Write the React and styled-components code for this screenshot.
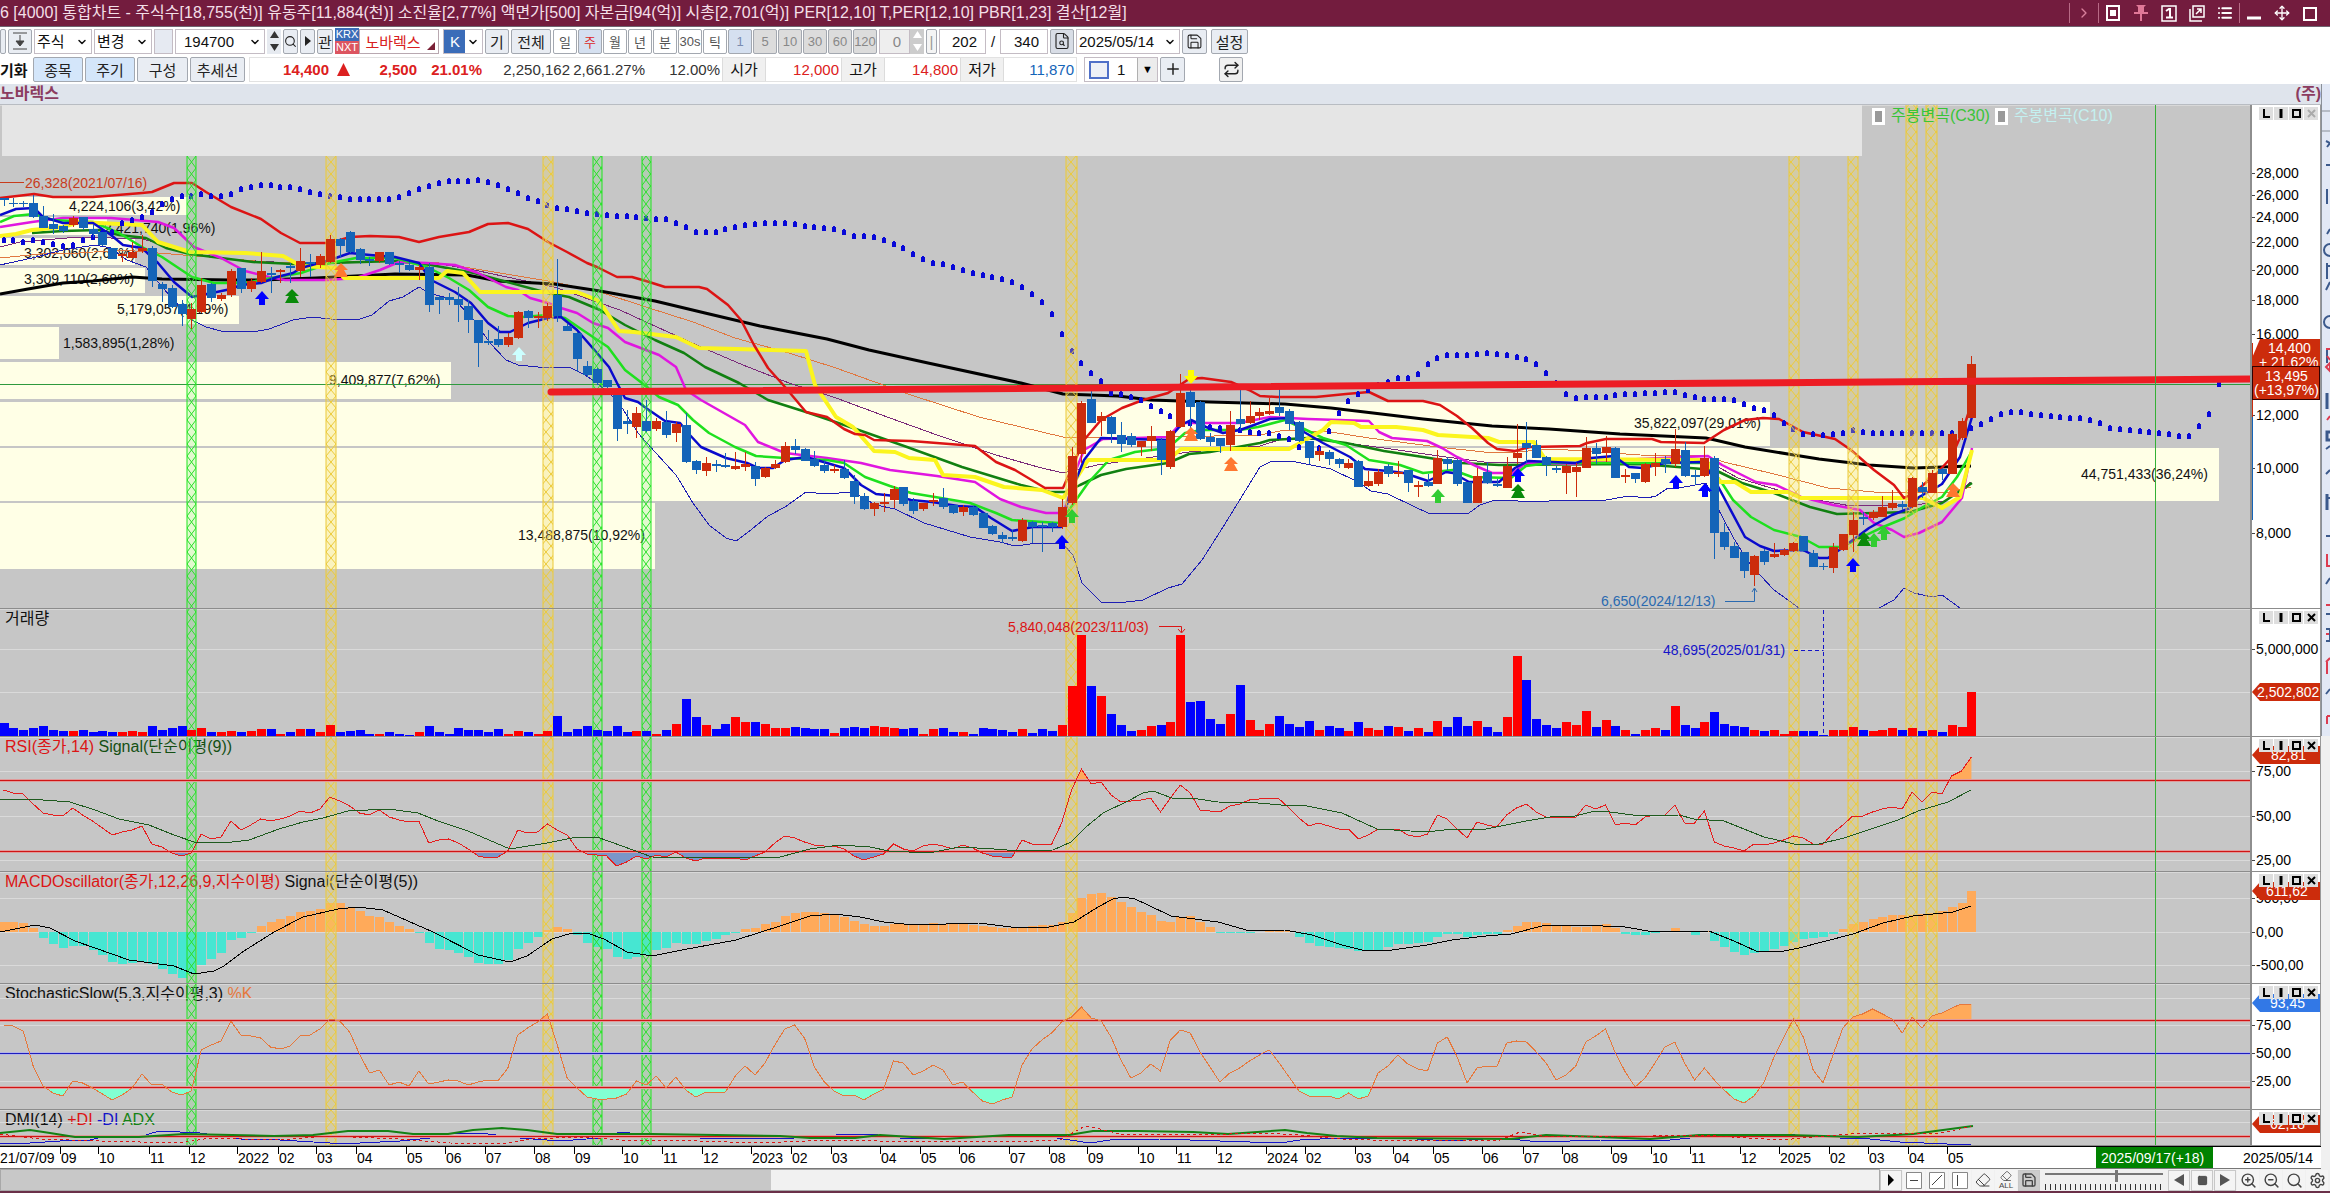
import React from 'react';
import styled, { createGlobalStyle } from 'styled-components';
import { ChevronDown, ChevronRight, Search, ZoomIn, ZoomOut, Settings, Move, Plus, Eraser, Save, Repeat, Square, List, FileSearch } from 'lucide-react';

const font = '"Liberation Sans", "Noto Sans CJK KR", sans-serif';

const GlobalStyle = createGlobalStyle`
  * { box-sizing: border-box; }
  body {
    margin: 0;
    background: #fff;
    overflow: hidden;
    font-family: ${font};
    font-size: 15px;
    color: #111;
  }
  button, input, select {
    font: inherit;
    margin: 0;
    padding: 0;
  }
`;

/* ---------- chart data ---------- */

const STEP = 9.889;
const X0 = 3.5;
const xAt = (i) => X0 + i * STEP;
const nums = (s) => s.trim().split(/\s+/).map(Number);

// high, body top, body bottom, low, up(1) / down(0)
const candles = `
198,198,200,206,0 198,203,204,207,0 201,203,204,207,0 195,203,217,218,0 206,216,228,228,0
214,224,229,234,0 225,226,231,233,0 216,218,225,227,1 217,217,228,230,0 225,229,234,237,0
232,232,245,246,0 248,248,259,259,0 253,254,256,262,1 242,252,258,258,1 235,248,251,253,1
246,248,281,287,0 282,284,289,302,0 285,288,307,308,0 300,304,314,326,0 303,309,319,329,1
278,285,312,313,1 283,284,298,302,0 293,295,299,301,1 269,271,295,297,1 268,268,289,293,0
278,281,289,292,1 252,271,282,283,1 267,273,275,293,0 269,270,272,283,1 263,266,268,283,0
248,261,271,277,1 254,262,264,277,0 254,256,265,268,1 235,239,262,263,1 238,239,246,257,0
231,232,252,253,0 248,249,260,264,0 257,259,261,266,0 252,252,261,263,1 252,252,264,265,0
261,263,265,273,0 262,265,270,271,0 265,267,270,280,1 263,267,305,312,0 295,297,300,314,0
293,297,300,305,0 287,299,305,322,0 300,306,320,333,0 320,320,343,367,0 330,341,343,345,0
326,339,345,347,0 333,337,345,347,1 311,312,338,339,1 310,311,318,328,0 312,316,318,328,1
303,306,318,321,1 259,295,316,322,0 324,326,331,331,0 332,333,359,372,0 361,366,375,377,0
368,369,383,385,0 380,380,387,388,0 395,395,429,441,0 410,421,424,434,0 407,413,427,438,1
400,421,431,432,0 418,421,429,431,1 411,422,435,438,0 422,424,433,442,1 413,425,462,463,0
460,461,470,474,0 457,463,471,476,1 460,464,466,472,0 453,465,467,468,0 452,466,469,470,1
452,464,467,471,1 462,466,479,486,0 467,468,477,478,1 460,464,468,469,1 442,446,462,463,1
439,446,450,454,0 448,449,461,461,0 451,459,466,467,0 460,465,471,473,0 465,469,471,473,1
460,469,478,479,0 475,481,497,504,0 493,496,509,510,0 502,503,509,516,1 493,502,504,512,1
486,489,500,508,1 487,487,504,506,0 498,501,511,514,0 503,503,509,511,1 493,500,502,506,1
488,498,507,509,0 505,505,513,514,0 505,507,512,516,1 506,507,515,516,0 513,513,528,528,0
525,526,534,535,0 532,535,539,543,0 530,537,539,541,0 518,520,541,542,1 521,522,527,543,0
522,525,527,552,0 522,523,527,532,0 499,507,527,529,1 447,456,503,505,1 401,403,454,463,1
390,399,423,423,0 412,416,421,436,1 416,417,434,443,0 422,435,444,452,0 433,436,445,447,0
441,441,447,456,1 426,436,441,451,1 438,440,460,475,0 430,431,467,469,1 374,393,427,428,1
390,392,407,430,0 401,402,439,440,0 433,437,442,446,0 438,438,446,453,0 411,425,445,451,1
388,419,424,430,0 401,416,423,424,1 408,412,416,420,1 398,411,414,415,1 388,407,413,416,0
409,411,424,430,0 421,422,441,442,0 441,441,458,464,0 447,451,455,461,1 450,452,459,465,0
458,459,464,468,0 459,463,468,469,1 460,461,487,487,0 471,481,486,487,1 469,472,484,486,1
464,466,474,477,0 461,472,474,477,1 470,470,483,492,0 481,485,487,497,1 474,482,486,487,0
450,458,484,484,1 457,459,464,470,0 459,460,484,486,0 482,482,503,503,0 468,476,503,503,1
462,472,483,484,0 479,484,486,487,0 457,466,488,488,1 424,453,458,464,1 422,443,448,463,0
440,445,458,458,0 456,457,465,476,0 466,468,470,473,0 464,466,473,494,1 463,467,472,497,1
437,448,468,468,1 443,448,454,464,0 436,447,453,462,1 447,448,478,478,0 469,475,477,483,1
473,473,479,483,0 463,464,482,483,1 453,463,467,476,1 456,459,464,473,0 429,449,464,467,1
442,450,476,477,0 470,475,477,485,0 446,458,476,477,1 456,458,533,559,0 523,532,547,550,0
542,546,558,558,0 552,552,571,578,0 555,556,575,586,1 549,551,562,565,0 543,554,557,558,1
548,550,555,556,1 542,543,551,552,1 536,536,551,552,0 550,553,567,567,0 563,566,567,570,0
543,547,568,573,1 534,534,550,551,1 512,520,535,552,1 512,517,519,525,0 510,512,518,520,1
496,507,517,517,1 490,503,508,510,1 501,504,507,510,0 477,478,507,508,1 482,487,492,498,0
470,473,493,493,1 468,469,474,480,0 433,434,474,474,1 418,421,438,440,1 356,364,418,418,1
`.trim().split(/\s+/).map((c) => c.split(',').map(Number));

const spanDots = nums(`
240 240 242 240 242 244 246 245 240 237 233 232 223 220 217 212 204 199 196 196
194 196 196 194 189 187 185 185 187 187 189 192 194 196 197 199 199 199 199 199
197 193 189 186 183 181 181 181 180 182 185 189 193 198 201 205 208 209 211 213
214 215 216 216 217 218 219 219 223 227 232 232 232 229 227 225 224 223 223 223
224 226 227 228 229 232 236 236 237 240 244 248 254 259 263 264 267 270 273 275
277 279 282 287 294 302 314 334 351 363 373 381 393 394 397 400 406 411 416 420
423 427 427 428 430 430 432 433 433 436 439 447 450 448 431 413 401 394 390 385
382 378 378 374 364 358 355 355 355 354 353 354 355 357 359 364 373 383 394 398
397 397 397 395 394 394 393 393 392 392 395 397 399 399 399 400 404 408 410 415
423 429 434 434 435 434 433 430 432 433 433 433 433 433 433 433 433 433 433 428
424 419 414 412 412 414 415 416 417 418 418 420 423 428 429 430 431 432 433 434
436 436 426 414 384`);

const volumes = nums(`
13 8 6 8 10 6 5 5 6 4 5 4 4 5 4 10 6 8 10 6 8 4 4 5 4 5 7 7 2 4 7 7 4 11 4 5 6 2 2 4
2 1 4 10 4 2 8 6 6 4 7 2 5 4 2 5 20 4 7 10 6 5 10 4 5 5 2 6 12 37 19 11 7 12 19 14 14 12 8 8
9 8 7 7 3 8 9 8 10 9 8 7 8 2 7 8 4 4 2 8 7 6 4 7 3 7 5 11 50 101 50 40 22 11 5 6 10 11 14 101
34 35 17 12 22 51 16 6 12 20 12 9 15 6 10 8 5 14 8 6 10 9 5 8 4 15 9 19 10 15 9 4 19 80 56 17 11 8 14 11
25 9 16 10 6 2 6 8 6 30 11 8 14 24 12 10 9 6 5 6 2 5 5 5 1 6 6 9 6 5 6 8 6 8 5 6 4 11 9 44`);

const rsi = nums(`
790 793 794 804 813 815 816 808 815 821 828 835 832 830 826 844 847 853 856 853 834 839 837 821 830 825 819 821 819 816
811 813 809 797 801 806 813 815 810 817 820 822 821 843 840 839 843 849 856 858 857 851 830 833 832 824 830 835 849 854
855 856 866 862 856 859 855 857 852 858 861 858 858 858 858 860 856 852 843 836 838 842 845 846 846 849 856 860 857 854
844 849 851 846 844 846 849 845 848 853 856 857 857 840 844 844 844 823 790 769 784 782 795 802 801 800 798 812 798 785
793 810 811 812 806 804 800 799 798 799 808 818 826 823 826 829 829 839 835 829 829 829 835 837 834 815 819 829 838 822
825 827 815 808 804 812 817 818 817 817 805 809 805 825 823 825 817 815 815 805 823 823 811 842 846 848 851 844 845 843
840 836 838 844 844 833 825 816 816 812 809 807 809 792 802 792 794 776 771 757`);

const macd = nums(`
10 10 9 4 -6 -12 -16 -14 -14 -18 -23 -30 -32 -31 -30 -32 -37 -42 -46 -42 -33 -27 -21 -8 -6 -1 6 10 13 16
20 21 23 29 29 25 21 16 15 10 6 3 -1 -11 -17 -18 -21 -25 -31 -32 -32 -28 -17 -11 -5 2 5 3 -3 -11
-15 -17 -25 -27 -25 -23 -18 -16 -11 -12 -12 -9 -7 -3 -1 3 4 8 10 16 19 20 20 19 18 15 11 8 6 6
8 8 8 8 9 8 8 8 7 6 5 4 4 5 6 7 7 10 19 34 38 39 35 30 25 20 17 11 10 15
16 10 5 -1 -1 -1 -1 0 2 2 1 -5 -11 -14 -15 -16 -17 -19 -19 -18 -15 -12 -12 -11 -10 -5 -2 -2 -5 -3
-2 -2 2 6 10 10 9 7 6 5 5 7 8 4 -2 -3 -3 -1 1 4 1 -3 1 -9 -15 -20 -23 -21 -20 -17
-14 -10 -7 -6 -5 -2 3 8 10 13 15 17 17 17 18 19 21 25 29 41`);

const stoch = nums(`
1025 1026 1031 1066 1086 1093 1096 1081 1083 1088 1094 1100 1095 1088 1074 1085 1084 1092 1095 1091
1050 1045 1041 1021 1035 1036 1038 1047 1049 1046 1036 1035 1029 1019 1021 1032 1054 1073 1070 1085
1082 1086 1071 1084 1082 1080 1081 1085 1082 1080 1081 1068 1035 1028 1022 1014 1045 1078 1088 1097
1099 1099 1098 1094 1081 1085 1076 1088 1077 1090 1097 1092 1092 1092 1076 1066 1075 1063 1045 1029
1025 1038 1067 1082 1091 1096 1095 1100 1094 1089 1061 1063 1075 1071 1065 1070 1085 1082 1092 1101
1104 1100 1097 1065 1049 1040 1033 1022 1017 1007 1018 1021 1037 1060 1078 1073 1064 1071 1040 1030
1033 1052 1067 1082 1073 1068 1061 1055 1050 1063 1077 1091 1096 1096 1096 1099 1093 1099 1096 1073
1066 1055 1064 1069 1071 1043 1037 1057 1083 1068 1066 1067 1043 1041 1042 1052 1063 1080 1075 1066
1042 1036 1029 1053 1072 1087 1078 1063 1047 1042 1063 1080 1068 1080 1090 1099 1103 1096 1083 1058
1038 1019 1037 1070 1083 1055 1028 1017 1014 1009 1014 1019 1033 1017 1028 1016 1013 1008 1004 1004`);

const priceLines = [
  { color: '#7a2a7a', w: 1, pts: '0,247 20,242 79,237 142,239 174,247 190,253 237,260 293,263 395,261 435,263 474,270 554,287 597,302 620,310 646,322 701,347 743,365 789,383 836,398 890,418 937,435 996,455 1038,467 1063,473 1097,465 1118,462 1189,452 1260,446 1285,438 1323,440 1384,448 1446,457 1492,463 1640,462 1711,463 1738,478 1801,497 1851,506 1914,505 1946,501 1971,482' },
  { color: '#e07840', w: 1, pts: '0,258 51,253 79,253 123,250 158,253 221,258 277,263 340,262 395,261 439,263 494,272 554,282 600,292 646,307 693,322 735,338 789,353 836,368 911,395 979,417 1021,427 1063,437 1168,437 1260,435 1285,430 1331,432 1369,438 1438,447 1484,452 1515,452 1553,449 1640,455 1706,456 1724,462 1774,474 1828,488 1874,492 1951,492 1971,487' },
  { color: '#1e1eb4', w: 1, pts: '0,265 32,258 63,250 95,245 111,248 127,260 146,267 162,287 174,300 192,320 206,327 221,331 253,332 269,329 293,320 312,317 340,320 360,319 372,315 389,301 403,297 419,287 429,293 455,300 474,320 490,343 506,360 518,365 538,367 569,367 585,375 597,383 613,397 619,403 638,433 655,452 676,475 693,503 709,525 726,538 736,541 747,533 768,516 785,507 806,492 825,494 853,492 863,498 876,505 895,509 924,523 970,537 1000,542 1015,546 1038,543 1063,544 1073,555 1082,583 1101,602 1118,603 1143,600 1168,588 1182,584 1202,560 1223,527 1244,493 1260,467 1270,462 1285,461 1296,462 1316,466 1331,469 1358,482 1371,491 1388,494 1415,507 1428,513 1469,513 1480,505 1495,500 1541,502 1557,500 1606,500 1629,496 1647,498 1656,496 1668,488 1679,488 1706,483 1715,503 1733,537 1747,560 1760,575 1774,590 1799,608' },
  { color: '#1e1eb4', w: 1, pts: '1879,608 1894,600 1904,588 1914,593 1932,597 1942,595 1960,608' },
  { color: '#000', w: 3, pts: '0,294 28,289 63,283 93,281 132,277 162,279 231,280 261,280 316,278 395,274 467,275 498,281 554,284 600,291 655,301 705,313 760,326 827,339 869,350 928,363 1021,383 1063,394 1118,396 1151,400 1210,402 1285,404 1331,408 1373,413 1423,419 1492,426 1549,429 1620,434 1706,438 1715,440 1745,447 1794,455 1819,459 1869,465 1914,468 1971,466' },
  { color: '#118011', w: 2.5, pts: '32,233 63,231 99,230 119,235 146,238 166,248 190,254 221,258 253,262 293,264 330,263 395,261 431,265 474,273 548,293 569,297 600,310 625,325 655,340 684,353 705,367 739,383 768,400 806,412 853,428 907,447 962,467 1021,485 1050,492 1067,492 1080,485 1101,475 1126,469 1168,463 1189,454 1210,452 1260,443 1270,440 1308,438 1346,443 1384,451 1423,457 1461,463 1499,465 1640,464 1715,470 1742,483 1774,493 1810,507 1837,514 1874,513 1910,512 1942,503 1972,483' },
  { color: '#e016e0', w: 2.5, pts: '0,227 32,222 63,218 111,218 158,222 174,228 194,247 221,258 245,271 269,277 285,280 328,280 356,278 380,270 399,262 427,263 455,265 478,273 506,287 518,290 530,298 548,303 561,308 577,313 593,323 608,328 625,342 659,355 676,367 686,390 701,400 745,425 758,442 785,453 827,458 861,463 890,470 937,476 975,482 1000,499 1021,507 1046,513 1063,513 1067,503 1076,470 1084,450 1103,439 1168,437 1181,423 1239,423 1270,417 1308,419 1369,421 1379,432 1392,438 1427,441 1442,448 1457,457 1476,466 1492,473 1513,473 1526,463 1576,464 1591,462 1640,459 1708,456 1722,465 1756,482 1776,485 1801,497 1833,505 1860,510 1874,523 1892,530 1904,537 1919,533 1942,522 1962,498 1972,448' },
  { color: '#1ee01e', w: 2.5, pts: '0,222 14,216 34,214 53,220 93,222 119,233 142,247 162,257 192,277 214,283 245,283 277,277 301,273 330,263 356,258 395,258 427,267 449,278 469,290 488,307 508,316 522,317 548,315 565,318 587,333 608,347 625,370 642,383 659,397 678,405 693,420 709,433 735,447 756,456 785,458 827,460 844,463 865,477 890,486 911,493 941,498 970,503 996,513 1012,520 1059,523 1069,510 1088,483 1109,460 1135,452 1168,448 1185,433 1202,430 1240,430 1258,427 1285,420 1300,427 1323,438 1346,445 1369,460 1400,465 1423,473 1453,470 1472,477 1511,478 1526,466 1549,463 1706,463 1720,480 1733,500 1751,517 1774,530 1801,537 1819,547 1842,547 1860,538 1883,527 1905,518 1923,507 1942,497 1957,477 1971,453' },
  { color: '#fbf51e', w: 4, pts: '0,236 16,234 32,230 63,227 79,222 119,224 142,225 158,242 190,252 245,253 283,256 301,266 336,268 344,278 439,278 447,271 463,273 480,292 577,292 597,300 604,308 619,331 634,332 676,337 699,348 806,351 815,385 836,417 853,427 874,451 895,452 909,458 935,460 943,475 975,477 1004,487 1042,490 1063,498 1069,490 1088,460 1168,460 1181,449 1289,449 1300,443 1323,430 1331,422 1354,423 1361,427 1396,427 1423,430 1438,435 1472,437 1488,438 1499,442 1534,442 1545,459 1706,460 1720,482 1735,482 1751,492 1788,492 1801,498 1923,498 1942,508 1960,497 1972,450' },
  { color: '#0a0acc', w: 2.5, pts: '0,215 16,209 34,208 43,217 63,223 93,223 111,235 123,245 142,248 158,263 174,282 192,297 212,293 231,289 241,285 261,283 277,277 293,273 301,268 330,260 350,253 370,255 395,257 419,263 431,280 455,292 471,303 488,323 500,332 510,332 528,323 548,318 561,317 577,330 597,353 609,367 617,383 625,398 638,402 646,408 665,421 680,423 688,433 701,447 726,458 747,463 758,468 773,468 785,460 806,457 827,463 844,468 861,485 876,494 895,496 911,500 932,502 958,506 975,507 991,518 1012,531 1033,527 1061,527 1069,497 1084,460 1101,438 1130,439 1168,440 1181,425 1191,420 1206,427 1223,433 1240,430 1254,425 1270,419 1289,418 1304,432 1323,443 1350,457 1365,469 1388,471 1404,473 1428,481 1446,472 1453,473 1469,482 1499,482 1515,468 1528,461 1576,463 1591,458 1614,456 1629,467 1643,468 1665,463 1702,462 1713,477 1729,507 1745,537 1760,546 1774,551 1803,550 1819,558 1828,558 1842,548 1869,528 1892,515 1910,508 1919,497 1932,490 1942,484 1960,457 1972,417' },
  { color: '#dc1414', w: 2.5, pts: '0,198 34,194 53,197 93,197 142,193 152,192 174,183 192,183 206,192 231,207 261,219 281,233 300,243 330,243 350,237 370,236 399,237 419,242 439,237 469,232 488,224 508,223 528,229 548,242 567,252 587,263 597,267 617,277 632,277 646,281 665,287 699,287 707,289 728,305 741,320 754,345 768,368 785,387 806,412 827,417 844,429 855,434 865,435 874,440 911,441 975,446 996,462 1015,470 1045,488 1063,488 1071,470 1084,440 1101,420 1122,408 1143,400 1168,393 1189,379 1202,378 1231,382 1249,390 1260,396 1277,397 1316,397 1346,394 1369,392 1388,401 1423,401 1440,405 1457,416 1472,428 1488,443 1497,449 1515,451 1530,447 1580,446 1587,443 1606,439 1652,439 1661,442 1704,443 1724,430 1745,420 1763,418 1779,419 1803,432 1835,439 1851,450 1874,470 1894,485 1904,498 1914,493 1937,473 1951,458 1962,433 1971,405' },
];

const rsiSignal = '0,800 30,799 70,802 95,810 119,819 149,825 174,835 194,842 224,843 249,840 279,829 303,822 323,818 348,811 388,809 418,813 438,821 468,831 510,849 547,843 572,838 597,837 622,846 652,857 687,858 780,857 810,849 840,845 870,847 889,851 929,853 959,847 994,849 1019,851 1053,850 1071,842 1086,827 1103,813 1128,801 1143,793 1153,791 1172,798 1198,799 1218,802 1258,803 1281,805 1307,806 1342,813 1377,829 1427,832 1452,829 1486,829 1526,821 1550,817 1575,816 1595,811 1610,812 1640,816 1679,815 1694,819 1724,821 1744,829 1764,837 1794,844 1819,844 1844,838 1868,830 1898,820 1918,811 1948,802 1971,790';
const macdSignal = '0,932 35,925 50,928 75,941 95,948 129,960 174,966 194,974 214,971 224,966 244,951 274,932 303,917 338,909 358,907 383,910 433,932 478,955 510,962 527,956 552,939 572,933 587,933 604,939 627,952 652,956 682,950 736,940 780,926 810,916 835,914 860,917 884,922 914,925 979,923 1019,928 1049,927 1074,922 1098,907 1113,899 1123,897 1135,899 1148,905 1171,916 1218,922 1250,931 1285,930 1312,935 1342,945 1362,950 1392,950 1427,945 1452,940 1486,936 1511,934 1546,925 1580,925 1625,927 1654,932 1709,931 1734,941 1756,951 1779,952 1799,948 1853,934 1883,923 1913,916 1953,912 1971,906';
const adx = '0,1133 30,1130 50,1133 75,1137 139,1137 184,1134 274,1136 313,1135 348,1131 388,1131 413,1134 448,1134 473,1130 502,1128 527,1130 557,1134 652,1134 780,1136 810,1138 855,1138 880,1135 944,1139 1009,1135 1069,1135 1093,1131 1138,1131 1193,1132 1228,1134 1285,1130 1307,1133 1337,1136 1377,1138 1511,1139 1546,1135 1600,1137 1650,1139 1699,1135 1789,1135 1858,1137 1913,1134 1943,1130 1973,1126';
const minusDi = '0,1143 30,1143 60,1141 90,1140 110,1135 139,1137 159,1131 200,1133 240,1139 280,1140 330,1143 360,1143 400,1141 430,1138 450,1133 480,1133 520,1138 560,1141 600,1138 620,1132 650,1135 700,1138 780,1139 850,1134 870,1134 900,1138 960,1138 990,1136 1050,1137 1070,1140 1090,1143 1110,1140 1160,1139 1220,1141 1280,1143 1300,1140 1340,1138 1400,1138 1450,1141 1500,1138 1540,1142 1600,1140 1660,1141 1710,1136 1780,1134 1840,1138 1870,1139 1900,1142 1971,1145';
const plusDi = '0,1134 40,1139 100,1141 180,1143 210,1138 280,1140 330,1136 400,1139 450,1143 500,1144 530,1139 580,1137 620,1140 700,1141 760,1143 830,1140 880,1141 960,1141 1010,1142 1060,1140 1085,1126 1100,1129 1120,1134 1200,1135 1260,1133 1300,1135 1340,1139 1400,1141 1500,1140 1520,1132 1545,1136 1600,1137 1700,1135 1780,1140 1850,1134 1940,1133 1960,1129 1971,1126';

// y, height, width
const profile = [
  [197, 18, 188], [217, 18, 107], [238, 27, 135], [268, 25, 145], [296, 28, 239],
  [327, 32, 59], [362, 37, 451], [402, 44, 1770], [448, 53, 2219], [503, 66, 655],
];

// x, baseline, text
const profileLabels = [
  [69, 211, '4,224,106(3,42%)'], [104, 233, '2,421,740(1,96%)'], [24, 258, '3,302,060(2,67%)'],
  [24, 284, '3,309,110(2,68%)'], [117, 314, '5,179,057(4,19%)'], [63, 348, '1,583,895(1,28%)'],
  [329, 385, '9,409,877(7,62%)'], [518, 540, '13,488,875(10,92%)'],
  [1634, 428, '35,822,097(29,01%)'], [2081, 479, '44,751,433(36,24%)'],
];

const bands = [
  [187, 9, 'g'], [326, 10, 'y'], [543, 10, 'y'], [593, 9, 'g'], [642, 9, 'g'],
  [1066, 11, 'y'], [1789, 10, 'y'], [1848, 10, 'y'], [1906, 11, 'y'], [1926, 11, 'y'],
];

const single = 'M0 -7L7 1H3V7H-3V1H-7Z';
const twin = 'M0 -7L7 0H3L7 7H-7L-3 0H-7Z';
const marks = [
  [262, 298, single, '#00f'], [1062, 542, single, '#00f'], [1518, 475, single, '#00f'],
  [1676, 482, single, '#00f'], [1705, 490, single, '#00f'], [1853, 565, single, '#00f'],
  [292, 296, twin, '#0a8a0a'], [1518, 491, twin, '#0a8a0a'], [1864, 539, twin, '#0a8a0a'],
  [341, 270, twin, '#ff7830'], [1191, 434, twin, '#ff7830'], [1231, 464, twin, '#ff7830'], [1953, 490, twin, '#ff7830'],
  [1072, 516, single, '#32cc32'], [1438, 496, single, '#32cc32'], [1874, 540, single, '#32cc32'], [1884, 533, single, '#32cc32'],
  [519, 354, single, '#ccffff'], [1191, 377, 'M0 7L7 -1H3V-7H-3V-1H-7Z', '#ff0'],
];

const months = [
  [60, '09'], [98, '10'], [149, '11'], [189, '12'], [237, '2022'], [278, '02'], [316, '03'], [356, '04'],
  [406, '05'], [445, '06'], [485, '07'], [534, '08'], [574, '09'], [622, '10'], [662, '11'], [702, '12'],
  [751, '2023'], [791, '02'], [831, '03'], [880, '04'], [920, '05'], [959, '06'], [1009, '07'], [1049, '08'],
  [1087, '09'], [1138, '10'], [1176, '11'], [1216, '12'], [1266, '2024'], [1305, '02'], [1355, '03'],
  [1393, '04'], [1433, '05'], [1482, '06'], [1523, '07'], [1562, '08'], [1611, '09'], [1651, '10'],
  [1690, '11'], [1740, '12'], [1779, '2025'], [1829, '02'], [1868, '03'], [1908, '04'], [1947, '05'],
];

const toPoints = (ys) => ys.map((y, i) => `${xAt(i)},${y}`).join(' ');
const toArea = (ys, base) => `${X0},${base} ${toPoints(ys)} ${xAt(ys.length - 1)},${base}`;

/* ---------- title bar ---------- */

const Page = styled.div`
  display: flex;
  flex-direction: column;
  min-height: 100vh;
  background: #fff;
`;

const TitleBar = styled.header`
  display: flex;
  align-items: center;
  justify-content: space-between;
  height: 27px;
  background: #731c3e;
  border-bottom: 1px solid #6e6470;
  color: #f6e6ec;
  white-space: pre;
`;

const Title = styled.h1`
  margin: 0;
  font-size: 16px;
  font-weight: 400;
  line-height: 24px;
  color: #f3dfe7;
`;

const TitleTools = styled.div`
  display: flex;
  align-items: center;
  gap: 12px;
`;

const TitleButton = styled.button`
  display: flex;
  align-items: center;
  justify-content: center;
  width: 16px;
  height: 20px;
  border: 0;
  background: none;
  color: ${(p) => (p.$dim ? '#d8809c' : '#fff')};
`;

const Divider = styled.span`
  width: 1px;
  height: 20px;
  margin: 0 -6px;
  background: #b86a86;
`;

/* ---------- toolbars ---------- */

const Toolbar = styled.div`
  display: flex;
  align-items: center;
  gap: 2px;
  height: 28px;
  white-space: nowrap;
`;

const Group = styled.div`
  display: flex;
  flex: none;
  gap: ${(p) => p.$gap || 0}px;
  font-size: ${(p) => p.$size || 15}px;
`;

const ToolButton = styled.button`
  display: flex;
  flex: none;
  align-items: center;
  justify-content: center;
  width: ${(p) => p.$w}px;
  height: 25px;
  border: 1px solid #a3a8b0;
  border-radius: 2px;
  background: ${(p) => p.$bg || '#e9edf3'};
  color: ${(p) => p.$color || '#222'};
`;

const Field = styled.div`
  position: relative;
  display: flex;
  flex: none;
  width: ${(p) => p.$w}px;
  height: 25px;
  border: 1px solid #c4bcc4;
  background: ${(p) => p.$bg || '#fff'};
  > svg {
    position: absolute;
    right: 3px;
    top: 6px;
    pointer-events: none;
  }
`;

const Select = styled.select`
  appearance: none;
  width: 100%;
  border: 0;
  padding: 0 2px;
  background: transparent;
  color: ${(p) => p.$color || '#111'};
`;

const KSelect = styled(Field)`
  background: linear-gradient(to right, #3a6cb8 21px, #fff 21px);
  > select { padding-left: 6px; }
`;

const TextBox = styled.input`
  width: 100%;
  min-width: 0;
  border: 0;
  padding: 0 8px;
  background: transparent;
  color: ${(p) => p.$color || '#111'};
  text-align: ${(p) => p.$align || 'right'};
`;

const Spinner = styled.div`
  display: flex;
  flex: none;
  flex-direction: column;
  width: 14px;
  height: 25px;
`;

const SpinButton = styled.button`
  display: flex;
  flex: 1;
  align-items: center;
  justify-content: center;
  border: 0;
  background: ${(p) => (p.$off ? '#ccc' : '#e6eaf0')};
  color: ${(p) => (p.$off ? '#fff' : '#333')};
`;

const Market = styled.div`
  display: flex;
  flex: none;
  flex-direction: column;
  width: 24px;
  color: #fff;
  font-size: 11px;
  line-height: 13px;
  text-align: center;
  > span:first-child { background: #3a6cb8; }
  > span:last-child { background: #dc5560; }
`;

const StockName = styled.button`
  position: relative;
  flex: none;
  width: 80px;
  height: 25px;
  margin: 0 2px 0 -2px;
  border: 1px solid #b8a8b0;
  padding-right: 12px;
  background: #fff;
  color: #d82020;
  &::after {
    content: '';
    position: absolute;
    right: 3px;
    bottom: 3px;
    border-left: 8px solid transparent;
    border-bottom: 8px solid #7a2036;
  }
`;

const Slash = styled.span`
  width: 10px;
  text-align: center;
`;

const Strong = styled.strong`
  flex: none;
  width: 31px;
`;

const Quote = styled.div`
  display: flex;
  flex: none;
  align-items: center;
  height: 25px;
  margin: 0 5px 0 2px;
  border: 1px solid #e2e2e2;
`;

const Value = styled.span`
  width: ${(p) => p.$w}px;
  padding-right: 2px;
  text-align: right;
  color: ${(p) => p.$color || '#333'};
  font-weight: ${(p) => (p.$bold ? 700 : 400)};
`;

const Rise = styled.span`
  width: 21px;
  padding-left: 6px;
  line-height: 0;
`;

const QuoteLabel = styled.span`
  width: 44px;
  line-height: 23px;
  text-align: center;
  background: #f0f0f0;
  border: solid #dcdcdc;
  border-width: 0 1px;
`;

const Swatch = styled.span`
  flex: none;
  width: 20px;
  height: 18px;
  margin: 3px 0 0 4px;
  border: 2px solid #5070c8;
  background: #eef0f6;
`;

const DropArrow = styled.button`
  flex: none;
  width: 20px;
  border: 0;
  border-left: 1px solid #b0b0b0;
  background: #ececec;
  font-size: 11px;
`;

const Spacer = styled.span`
  flex: none;
  width: ${(p) => p.$w}px;
`;

/* ---------- chart ---------- */

const Body = styled.main`
  display: flex;
  margin-top: 1px;
`;

const ChartColumn = styled.div`
  flex: 1;
  min-width: 0;
`;

const ChartHeader = styled.div`
  display: flex;
  justify-content: space-between;
  height: 21px;
  overflow: hidden;
  background: #dfe4ec;
  border-bottom: 1px solid #b8bcc2;
  color: #8c3c60;
  font-size: 16px;
  font-weight: 700;
  line-height: 20px;
`;

const PanelRow = styled.section`
  display: flex;
  height: ${(p) => p.$h}px;
  border-bottom: 1px solid #8c8c8c;
`;

const Plot = styled.div`
  position: relative;
  flex: 1;
  min-width: 0;
  background: #c6c6c6;
  box-shadow: inset 0 1px #d8d8d8;
  overflow: hidden;
`;

const Drawing = styled.svg`
  position: relative;
  display: block;
  width: 100%;
  height: 100%;
  font-size: 14px;
`;

const Caption = styled.h2`
  position: absolute;
  left: 5px;
  top: 0;
  margin: 0;
  font-size: 16px;
  font-weight: 400;
  line-height: 20px;
`;

const Tint = styled.span`
  color: ${(p) => p.$color};
`;

const AxisBox = styled.div`
  position: relative;
  flex: none;
  width: 71px;
  background: #fff;
  border-left: 2px solid #8e8e8e;
  border-right: 1px solid #999;
`;

const PanelButtons = styled.div`
  position: absolute;
  right: 2px;
  top: 2px;
  display: flex;
  gap: 1px;
`;

const PanelButton = styled.button`
  display: flex;
  align-items: center;
  justify-content: center;
  width: 14px;
  height: 13px;
  border: 0;
  background: #dedede;
  color: ${(p) => (p.$off ? '#aaa' : '#000')};
`;

const Legend = styled.div`
  position: absolute;
  left: 1872px;
  top: 2px;
  display: flex;
  gap: 5px;
  font-size: 16px;
  line-height: 18px;
`;

const LegendItem = styled.label`
  display: flex;
  align-items: center;
  gap: 6px;
  color: ${(p) => p.$color};
`;

const LegendCheck = styled.input`
  appearance: none;
  width: 13px;
  height: 17px;
  border: 3px solid #fff;
  background: #999;
`;

const TimeAxis = styled.div`
  height: 24px;
  background: #fff;
  border-top: 1px solid #000;
  border-bottom: 2px solid #777;
`;

const Bottom = styled.footer`
  display: flex;
  align-items: center;
  height: 24px;
  margin-top: -1px;
  background: #f0f0f0;
  border-bottom: 2px solid #6a3048;
`;

const ScrollTrack = styled.div`
  flex: 1;
  height: 22px;
  border: 1px solid #a8a8a8;
  background: #f1f1f1;
`;

const ScrollThumb = styled.div`
  width: 41%;
  height: 100%;
  background: #c8c8c8;
`;

const BottomTools = styled.div`
  display: flex;
  flex: none;
  align-items: center;
  width: 450px;
  gap: 1px;
`;

const IconButton = styled.button`
  display: flex;
  flex: none;
  align-items: center;
  justify-content: center;
  width: 22px;
  height: 21px;
  border: ${(p) => (p.$plain ? '0' : '1px solid #c8c8c8')};
  background: ${(p) => p.$bg || '#f4f4f4'};
  color: #444;
`;

const EraseAll = styled(IconButton)`
  flex-direction: column;
  font-size: 8px;
  line-height: 8px;
`;

const SliderBox = styled.div`
  display: flex;
  flex-direction: column;
  gap: 2px;
  width: 118px;
  margin: 0 4px;
  &::after {
    content: '';
    height: 6px;
    background: repeating-linear-gradient(to right, #333 0 1px, transparent 1px 5px);
  }
`;

const Slider = styled.input`
  appearance: none;
  width: 100%;
  height: 12px;
  background: linear-gradient(#777, #777) 0 3px / 100% 2px no-repeat;
  &::-webkit-slider-thumb {
    appearance: none;
    width: 3px;
    height: 12px;
    background: #777;
  }
`;

const SideStrip = styled.aside`
  flex: none;
  width: 9px;
  background: linear-gradient(#e2e8f5 652px, #f0f0f0 652px);
`;

function Line({ pts, color, w = 1, dash }) {
  return (
    <polyline
      points={pts}
      fill="none"
      stroke={color}
      strokeWidth={w}
      strokeDasharray={dash}
      strokeLinejoin="round"
      shapeRendering={w === 1 ? 'crispEdges' : 'auto'}
    />
  );
}

function Rule({ y, color = '#dadada', w = 1 }) {
  return <line x1="0" x2="100%" y1={y} y2={y} stroke={color} strokeWidth={w} shapeRendering="crispEdges" />;
}

function Level({ y, color, halo }) {
  return (
    <>
      <Rule y={y} color={halo} w={3} />
      <Rule y={y} color={color} />
    </>
  );
}

function Bands({ top, height }) {
  return bands.map(([x, w, kind]) => (
    <rect key={x} x={x} y={top} width={w} height={height} fill={`url(#hatch-${kind})`} stroke={kind === 'g' ? '#1ee61e' : '#ecca38'} />
  ));
}

function Hatches() {
  return (
    <defs>
      <pattern id="hatch-g" width="9" height="12" patternUnits="userSpaceOnUse" x="187">
        <rect width="9" height="12" fill="#6ee66e" opacity="0.2" />
        <path d="M0 0L9 12M9 0L0 12" stroke="#28e028" fill="none" />
      </pattern>
      <pattern id="hatch-y" width="10" height="12" patternUnits="userSpaceOnUse" x="326">
        <rect width="10" height="12" fill="#f0d860" opacity="0.3" />
        <path d="M0 0L10 12M10 0L0 12" stroke="#ecca38" fill="none" />
      </pattern>
    </defs>
  );
}

function Axis({ top, ticks = [], tag, children, lastOff }) {
  return (
    <AxisBox>
      <Drawing>
        <g transform={`translate(0 ${-top})`}>
          {ticks.map(([y, label]) => (
            <g key={label}>
              <path d={`M0 ${y + 0.5}h3`} stroke="#444" />
              <text x="4" y={y + 5}>{label}</text>
            </g>
          ))}
          {tag && (
            <g fill={tag.color}>
              <path d={`M0 ${tag.y}L8 ${tag.y - 9}H70V${tag.y + 9}H8Z`} />
              <text x={tag.x} y={tag.y + 5} fill="#fff">{tag.text}</text>
            </g>
          )}
          {children}
        </g>
      </Drawing>
      <PanelButtons>
        <PanelButton aria-label="L"><svg width="8" height="9"><path d="M2 0V8H8" stroke="#000" strokeWidth="2" fill="none" /></svg></PanelButton>
        <PanelButton aria-label="I"><svg width="8" height="9"><path d="M4 0V9" stroke="#000" strokeWidth="3" /></svg></PanelButton>
        <PanelButton aria-label="최대화"><svg width="9" height="9"><path d="M1 1H8V8H1Z" stroke="#000" strokeWidth="2" fill="none" /></svg></PanelButton>
        <PanelButton aria-label="닫기" $off={lastOff}><svg width="9" height="9"><path d="M1 1L8 8M8 1L1 8" stroke="currentColor" strokeWidth="2" /></svg></PanelButton>
      </PanelButtons>
    </AxisBox>
  );
}

function Panel({ top, height, caption, axis, overlay, children }) {
  return (
    <PanelRow $h={height}>
      <Plot>
        {caption && <Caption>{caption}</Caption>}
        <Drawing>
          <g transform={`translate(0 ${-top})`}>
            {children}
            <line x1="2155.5" x2="2155.5" y1={top} y2={top + height} stroke="#35b035" />
          </g>
        </Drawing>
        {overlay}
      </Plot>
      {axis}
    </PanelRow>
  );
}

function PricePanel() {
  const axis = (
    <Axis
      top={105}
      lastOff
      ticks={[[173, '28,000'], [195, '26,000'], [217, '24,000'], [242, '22,000'], [270, '20,000'], [300, '18,000'], [334, '16,000'], [415, '12,000'], [468, '10,000'], [533, '8,000']]}
    >
      <rect x="-2" y="343" width="3" height="74" fill="#cc2c0c" />
      <rect x="-2" y="417" width="3" height="103" fill="#1464b8" />
      <path d="M8 339H70V366H0V358Z" fill="#cc2c0c" />
      <text x="16" y="353" fill="#fff">14,400</text>
      <text x="7" y="367" fill="#fff">+ 21,62%</text>
      <rect x="0.500" y="366.500" width="67" height="33" fill="#cc2c0c" stroke="#300" />
      <text x="13" y="381" fill="#fff">13,495</text>
      <text x="2" y="395" fill="#fff">(+13,97%)</text>
    </Axis>
  );
  const overlay = (
    <Legend>
      <LegendItem $color="#38c438"><LegendCheck type="checkbox" />주봉변곡(C30)</LegendItem>
      <LegendItem $color="#c4f0f0"><LegendCheck type="checkbox" />주봉변곡(C10)</LegendItem>
    </Legend>
  );
  return (
    <Panel top={105} height={504} axis={axis} overlay={overlay}>
      <Hatches />
      {profile.map(([y, h, w]) => <rect key={y} x="0" y={y} width={w} height={h} fill="#ffffe6" />)}
      {profileLabels.map(([x, y, t]) => <text key={t} x={x} y={y} fill="#111">{t}</text>)}
      <path d="M0 182.500H24" stroke="#c83c1c" />
      <text x="25" y="188" fill="#c83c1c">26,328(2021/07/16)</text>
      <Rule y={384} color="#2e9a3e" />
      {priceLines.map((l, i) => <Line key={i} {...l} />)}
      {spanDots.map((y, i) => (
        <path key={i} d={`M${Math.round(xAt(i)) - 2} ${y - 2}h1v-1h2v1h1v5h-4z`} fill="#0808d8" />
      ))}
      <Bands top={100} height={512} />
      <g shapeRendering="crispEdges">
        {candles.map(([hi, a, b, lo, up], i) => {
          const x = Math.round(xAt(i));
          return (
            <g key={i} fill={up ? '#cc2c0c' : '#1464b8'}>
              <rect x={x} y={hi} width="1" height={lo - hi} />
              <rect x={x - 4} y={a} width="9" height={Math.max(b - a, 1)} />
            </g>
          );
        })}
      </g>
      {marks.map(([x, y, d, c]) => <path key={`${x}-${y}`} d={d} fill={c} transform={`translate(${x} ${y})`} />)}
      <path d="M551 392L2262 379" stroke="#ed1c24" strokeWidth="7" strokeLinecap="round" />
      <text x="1601" y="606" fill="#2a6ab0">6,650(2024/12/13)</text>
      <path d="M1725 601.500H1754.500V589M1752 592L1754.500 588L1757 592" stroke="#2a6ab0" fill="none" />
      <rect x="2" y="105" width="1860" height="51" fill="#e5e5e5" />
    </Panel>
  );
}

function VolumePanel() {
  const axis = <Axis top={609} ticks={[[649, '5,000,000']]} tag={{ y: 692, x: 5, text: '2,502,802', color: '#cc2c0c' }} />;
  return (
    <Panel top={609} height={128} caption="거래량" axis={axis}>
      <Rule y={649} />
      <Rule y={692} />
      <Bands top={600} height={140} />
      <text x="1008" y="632" fill="#dc1414">5,840,048(2023/11/03)</text>
      <path d="M1159 626.500H1181.500V632M1178 629L1181.500 633L1185 629" stroke="#dc1414" fill="none" />
      <text x="1663" y="655" fill="#1414c8">48,695(2025/01/31)</text>
      <path d="M1794 650.500H1823.500M1823.500 610V736" stroke="#1414c8" strokeDasharray="4 3" fill="none" />
      <g shapeRendering="crispEdges">
        {volumes.map((v, i) => (
          <rect key={i} x={Math.round(xAt(i)) - 4} y={736 - v} width="9" height={v} fill={candles[i][4] ? '#f00' : '#00f'} />
        ))}
      </g>
    </Panel>
  );
}

function RsiPanel() {
  const axis = <Axis top={737} ticks={[[771, '75,00'], [816, '50,00'], [860, '25,00']]} tag={{ y: 755, x: 19, text: '82,81', color: '#cc2c0c' }} />;
  const caption = <><Tint $color="#dc1414">RSI(종가,14)</Tint> <Tint $color="#145014">Signal(단순이평(9))</Tint></>;
  return (
    <Panel top={737} height={135} caption={caption} axis={axis}>
      <clipPath id="rsi-hot"><rect x="0" y="737" width="2300" height="43" /></clipPath>
      <clipPath id="rsi-cold"><rect x="0" y="851" width="2300" height="30" /></clipPath>
      {[771, 816, 860].map((y) => <Rule key={y} y={y} />)}
      <Bands top={730} height={150} />
      <polygon points={toArea(rsi, 780)} fill="#ffaa5a" clipPath="url(#rsi-hot)" />
      <polygon points={toArea(rsi, 851)} fill="#7a96c8" clipPath="url(#rsi-cold)" />
      <Level y={780} color="#d01414" halo="#e09a9a" />
      <Level y={851} color="#d01414" halo="#e09a9a" />
      <Line pts={toPoints(rsi)} color="#e61e1e" />
      <Line pts={rsiSignal} color="#1e5a1e" />
    </Panel>
  );
}

function MacdPanel() {
  const axis = <Axis top={872} ticks={[[898, '500,00'], [932, '0,00'], [965, '-500,00']]} tag={{ y: 891, x: 14, text: '611,62', color: '#cc2c0c' }} />;
  const caption = <><Tint $color="#dc1414">MACDOscillator(종가,12,26,9,지수이평)</Tint> Signal(단순이평(5))</>;
  return (
    <Panel top={872} height={112} caption={caption} axis={axis}>
      {[898, 932, 965].map((y) => <Rule key={y} y={y} />)}
      <g shapeRendering="crispEdges">
        {macd.map((v, i) => (
          <rect key={i} x={Math.round(xAt(i)) - 4} y={v > 0 ? 932 - v : 932} width="9" height={Math.abs(v)} fill={v > 0 ? '#ffaa5a' : '#46e6d2'} />
        ))}
      </g>
      <Bands top={860} height={130} />
      <Line pts={macdSignal} color="#000" />
    </Panel>
  );
}

function StochPanel() {
  const axis = <Axis top={984} ticks={[[1025, '75,00'], [1053, '50,00'], [1081, '25,00']]} tag={{ y: 1003, x: 18, text: '93,45', color: '#3278e6' }} />;
  const caption = <>StochasticSlow(5,3,지수이평,3) <Tint $color="#e6783c">%K</Tint></>;
  return (
    <Panel top={984} height={126} caption={caption} axis={axis}>
      <clipPath id="st-hot"><rect x="0" y="984" width="2300" height="36" /></clipPath>
      <clipPath id="st-cold"><rect x="0" y="1088" width="2300" height="22" /></clipPath>
      {[998, 1025, 1081].map((y) => <Rule key={y} y={y} />)}
      <Bands top={980} height={140} />
      <polygon points={toArea(stoch, 1020)} fill="#ffaa5a" clipPath="url(#st-hot)" />
      <polygon points={toArea(stoch, 1088)} fill="#82ffd2" clipPath="url(#st-cold)" />
      <Level y={1020} color="#d01414" halo="#e09a9a" />
      <Level y={1053} color="#1e1ebe" halo="#b4b4e6" />
      <Level y={1087} color="#d01414" halo="#e09a9a" />
      <Line pts={toPoints(stoch)} color="#e6783c" />
    </Panel>
  );
}

function DmiPanel() {
  const axis = <Axis top={1110} tag={{ y: 1124, x: 18, text: '62,18', color: '#cc2c0c' }} />;
  const caption = <>DMI(14) <Tint $color="#dc1414">+DI</Tint> <Tint $color="#1414c8">-DI</Tint> <Tint $color="#148214">ADX</Tint></>;
  return (
    <Panel top={1110} height={36} caption={caption} axis={axis}>
      <Rule y={1122} />
      <Bands top={1100} height={60} />
      <Line pts={minusDi} color="#1414c8" />
      <Level y={1136} color="#d01414" halo="#e09a9a" />
      <Line pts={adx} color="#148214" w={2} />
      <Line pts={plusDi} color="#dc1414" dash="3 3" />
    </Panel>
  );
}

function Side() {
  const blue = '#3c5a8c';
  const red = '#dc3c50';
  return (
    <SideStrip>
      <svg width="9" height="652">
        <path d="M0.500 0V652M0 27H9M0 47H9" stroke="#8a9098" fill="none" />
        <path d="M5 57l4 2l-3 4M5 81H9M6 105V120M6 150l3-5M9 160a6 6 0 0 0 0 12M6 179v16M5 182h4M5 206l4-8M9 232a6 6 0 0 0 0 12M6 265v14M5 390l4-4M5 365l4-3M5 414h4M5 452h4M5 500l4-6M5 530h4M5 545h4v12h-4M5 610l4-5" stroke={blue} strokeWidth="2" fill="none" />
        <path d="M5 265h4M6 272l3 4M5 283l4-4v8zM6 470v12h3M5 521h4M6 578v12M5 578l4-4M6 632v8M6 632h3M6 336l3-4M5 550h3" stroke={red} strokeWidth="2" fill="none" />
        <path d="M6 309v16M6 410v16M9 348H6v8h3" stroke={blue} strokeWidth="3" fill="none" />
      </svg>
    </SideStrip>
  );
}

function FramedIcon({ d }) {
  return (
    <svg width="18" height="19">
      <path d="M1.500 1.500H16.500V17.500H1.500Z" stroke="#888" fill="#fff" />
      <path d={d} stroke="#444" />
    </svg>
  );
}

const units = ['일', '주', '월', '년', '분', '30s', '틱'];
const minutes = ['1', '5', '10', '30', '60', '120'];

function App() {
  return (
    <Page>
      <GlobalStyle />
      <TitleBar>
        <Title>{'6 [4000] 통합차트 - 주식수[18,755(천)] 유동주[11,884(천)] 소진율[2,77%] 액면가[500] 자본금[94(억)] 시총[2,701(억)] PER[12,10] T,PER[12,10] PBR[1,23] 결산[12월]'}</Title>
        <TitleTools>
          <Divider />
          <TitleButton $dim aria-label="펼치기"><ChevronRight size={16} /></TitleButton>
          <Divider />
          <TitleButton aria-label="화면"><svg width="14" height="16"><path d="M1 1H13V15H1Z" stroke="#fff" strokeWidth="2" fill="none" /><path d="M4 5H10V11H4Z" fill="#fff" /></svg></TitleButton>
          <TitleButton $dim aria-label="고정"><svg width="14" height="16"><path d="M2 0H12L10 2V7H14V9H8V16H6V9H0V7H4V2Z" fill="#e07898" /></svg></TitleButton>
          <TitleButton aria-label="1번 화면"><svg width="16" height="17"><path d="M1 1H15V16H1Z" stroke="#fff" strokeWidth="1.500" fill="none" /><path d="M5 6L8 4H9V12M5 12.500H12" stroke="#fff" strokeWidth="2" fill="none" /></svg></TitleButton>
          <TitleButton aria-label="복사"><svg width="16" height="17"><path d="M4 1H15V12H4ZM1 4V16H13M7 9L12 4M8 4H12V8" stroke="#fff" strokeWidth="1.500" fill="none" /></svg></TitleButton>
          <TitleButton aria-label="목록"><List size={18} strokeWidth={3} /></TitleButton>
          <Divider />
          <TitleButton aria-label="최소화"><svg width="14" height="16"><path d="M0 13H14" stroke="#fff" strokeWidth="3" /></svg></TitleButton>
          <TitleButton aria-label="이동"><Move size={16} /></TitleButton>
          <TitleButton aria-label="최대화"><svg width="14" height="15"><path d="M1 2H13V14H1Z" stroke="#fff" strokeWidth="2" fill="none" /></svg></TitleButton>
          <span />
        </TitleTools>
      </TitleBar>

      <Toolbar>
        <ToolButton $w={6} aria-label="이전" />
        <ToolButton $w={24} aria-label="내리기"><svg width="16" height="18"><path d="M1 1H15M1 17H15M8 3V13M4 9L8 14L12 9Z" stroke="#444" fill="#444" /></svg></ToolButton>
        <Field $w={58}><Select aria-label="종목 구분"><option>주식</option></Select><ChevronDown size={12} strokeWidth={3} /></Field>
        <Field $w={58}><Select aria-label="변경"><option>변경</option></Select><ChevronDown size={12} strokeWidth={3} /></Field>
        <Field $w={19} $bg="#e6eaf2" />
        <Field $w={90}><TextBox aria-label="종목코드" defaultValue="194700" $align="left" /><ChevronDown size={12} strokeWidth={3} /></Field>
        <Spinner>
          <SpinButton aria-label="증가"><svg width="9" height="7"><path d="M4.500 0L9 7H0Z" fill="currentColor" /></svg></SpinButton>
          <SpinButton aria-label="감소"><svg width="9" height="7"><path d="M4.500 7L9 0H0Z" fill="currentColor" /></svg></SpinButton>
        </Spinner>
        <ToolButton $w={15} aria-label="검색"><Search size={13} /></ToolButton>
        <ToolButton $w={15} aria-label="다음"><svg width="6" height="10"><path d="M0 0L6 5L0 10Z" fill="#222" /></svg></ToolButton>
        <ToolButton $w={16}>관</ToolButton>
        <Market><span>KRX</span><span>NXT</span></Market>
        <StockName>노바렉스</StockName>
        <KSelect $w={40}><Select $color="#fff" aria-label="거래소"><option>K</option></Select><ChevronDown size={12} strokeWidth={3} /></KSelect>
        <ToolButton $w={24}>기</ToolButton>
        <ToolButton $w={40}>전체</ToolButton>
        <Group $gap={1} $size={13}>
          {units.map((u) => (
            <ToolButton key={u} $w={24} $bg={u === '주' ? '#d5e0f0' : '#fff'} $color={u === '주' ? '#dc2828' : '#555'}>{u}</ToolButton>
          ))}
          {minutes.map((m) => (
            <ToolButton key={m} $w={24} $bg={m === '1' ? '#d5e0f0' : '#dcdcdc'} $color={m === '1' ? '#7a8cb0' : '#888'}>{m}</ToolButton>
          ))}
        </Group>
        <Group>
          <Field $w={31} $bg="#eee"><TextBox aria-label="분" defaultValue="0" $color="#888" /></Field>
          <Spinner>
            <SpinButton $off aria-label="분 증가"><svg width="9" height="7"><path d="M4.500 0L9 7H0Z" fill="currentColor" /></svg></SpinButton>
            <SpinButton $off aria-label="분 감소"><svg width="9" height="7"><path d="M4.500 7L9 0H0Z" fill="currentColor" /></svg></SpinButton>
          </Spinner>
        </Group>
        <ToolButton $w={11} $bg="#f4f4f4" $color="#999">|</ToolButton>
        <Field $w={47}><TextBox aria-label="표시 봉수" defaultValue="202" /></Field>
        <Slash>/</Slash>
        <Field $w={48}><TextBox aria-label="전체 봉수" defaultValue="340" /></Field>
        <ToolButton $w={24} $bg="#d8dde6" aria-label="조회"><FileSearch size={18} strokeWidth={1.5} /></ToolButton>
        <Field $w={104}><Select aria-label="날짜"><option>2025/05/14</option></Select><ChevronDown size={12} strokeWidth={3} /></Field>
        <ToolButton $w={25} aria-label="저장"><Save size={17} strokeWidth={1.5} /></ToolButton>
        <Spacer $w={0} />
        <ToolButton $w={37}>설정</ToolButton>
      </Toolbar>

      <Toolbar>
        <Strong>기화</Strong>
        <ToolButton $w={50} $bg="#d4e6fa">종목</ToolButton>
        <ToolButton $w={50} $bg="#d4e6fa">주기</ToolButton>
        <ToolButton $w={51}>구성</ToolButton>
        <ToolButton $w={55}>추세선</ToolButton>
        <Quote>
          <Value $w={81} $color="#dc2020" $bold>14,400</Value>
          <Rise><svg width="13" height="13"><path d="M6.500 0L13 13H0Z" fill="#dc2020" /></svg></Rise>
          <Value $w={67} $color="#dc2020" $bold>2,500</Value>
          <Value $w={65} $color="#dc2020" $bold>21.01%</Value>
          <Value $w={88}>2,250,162</Value>
          <Value $w={75}>2,661.27%</Value>
          <Value $w={75}>12.00%</Value>
          <QuoteLabel>시가</QuoteLabel>
          <Value $w={75} $color="#dc2020">12,000</Value>
          <QuoteLabel>고가</QuoteLabel>
          <Value $w={75} $color="#dc2020">14,800</Value>
          <QuoteLabel>저가</QuoteLabel>
          <Value $w={72} $color="#1464b8">11,870</Value>
        </Quote>
        <Field $w={74}>
          <Swatch />
          <TextBox aria-label="선 굵기" defaultValue="1" $align="left" />
          <DropArrow aria-label="선 굵기 목록">▼</DropArrow>
        </Field>
        <ToolButton $w={25} aria-label="추가"><Plus size={18} /></ToolButton>
        <Spacer $w={30} />
        <ToolButton $w={24} $bg="#f0f0f0" aria-label="새로고침"><Repeat size={17} /></ToolButton>
      </Toolbar>

      <Body>
        <ChartColumn>
          <ChartHeader><span>노바렉스</span><span>(주)</span></ChartHeader>
          <PricePanel />
          <VolumePanel />
          <RsiPanel />
          <MacdPanel />
          <StochPanel />
          <DmiPanel />
          <TimeAxis>
            <Drawing>
              <text x="0" y="16">21/07/09</text>
              {months.map(([x, t]) => (
                <g key={x}>
                  <path d={`M${x + 0.5} 0v7`} stroke="#000" />
                  <text x={x + 1} y="16">{t}</text>
                </g>
              ))}
              <rect x="2096" y="0" width="117" height="22" fill="#008200" />
              <text x="2101" y="16" fill="#fff">2025/09/17(+18)</text>
              <text x="2243" y="16">2025/05/14</text>
            </Drawing>
          </TimeAxis>
        </ChartColumn>
        <Side />
      </Body>

      <Bottom>
        <ScrollTrack><ScrollThumb /></ScrollTrack>
        <BottomTools>
          <IconButton aria-label="오른쪽으로"><svg width="6" height="12"><path d="M0 0L6 6L0 12Z" /></svg></IconButton>
          <IconButton $plain aria-label="수평선"><FramedIcon d="M5 9.500H13" /></IconButton>
          <IconButton $plain aria-label="추세선"><FramedIcon d="M4 14L14 4" /></IconButton>
          <IconButton $plain aria-label="수직선"><FramedIcon d="M6.500 4V15" /></IconButton>
          <IconButton $plain aria-label="지우기"><Eraser size={16} strokeWidth={1.5} /></IconButton>
          <EraseAll $plain aria-label="모두 지우기"><Eraser size={12} strokeWidth={1.5} />ALL</EraseAll>
          <IconButton $bg="#ccc" aria-label="저장"><Save size={16} /></IconButton>
          <SliderBox><Slider type="range" aria-label="속도" min="0" max="100" defaultValue="61" /></SliderBox>
          <IconButton aria-label="뒤로"><svg width="10" height="12"><path d="M10 0L0 6L10 12Z" fill="#555" /></svg></IconButton>
          <IconButton aria-label="정지"><Square size={11} fill="#555" /></IconButton>
          <IconButton aria-label="앞으로"><svg width="10" height="12"><path d="M0 0L10 6L0 12Z" fill="#555" /></svg></IconButton>
          <IconButton $plain aria-label="확대"><ZoomIn size={17} /></IconButton>
          <IconButton $plain aria-label="축소"><ZoomOut size={17} /></IconButton>
          <IconButton $plain aria-label="찾기"><Search size={17} /></IconButton>
          <IconButton $plain aria-label="설정"><Settings size={17} /></IconButton>
        </BottomTools>
      </Bottom>
    </Page>
  );
}

export default App;
